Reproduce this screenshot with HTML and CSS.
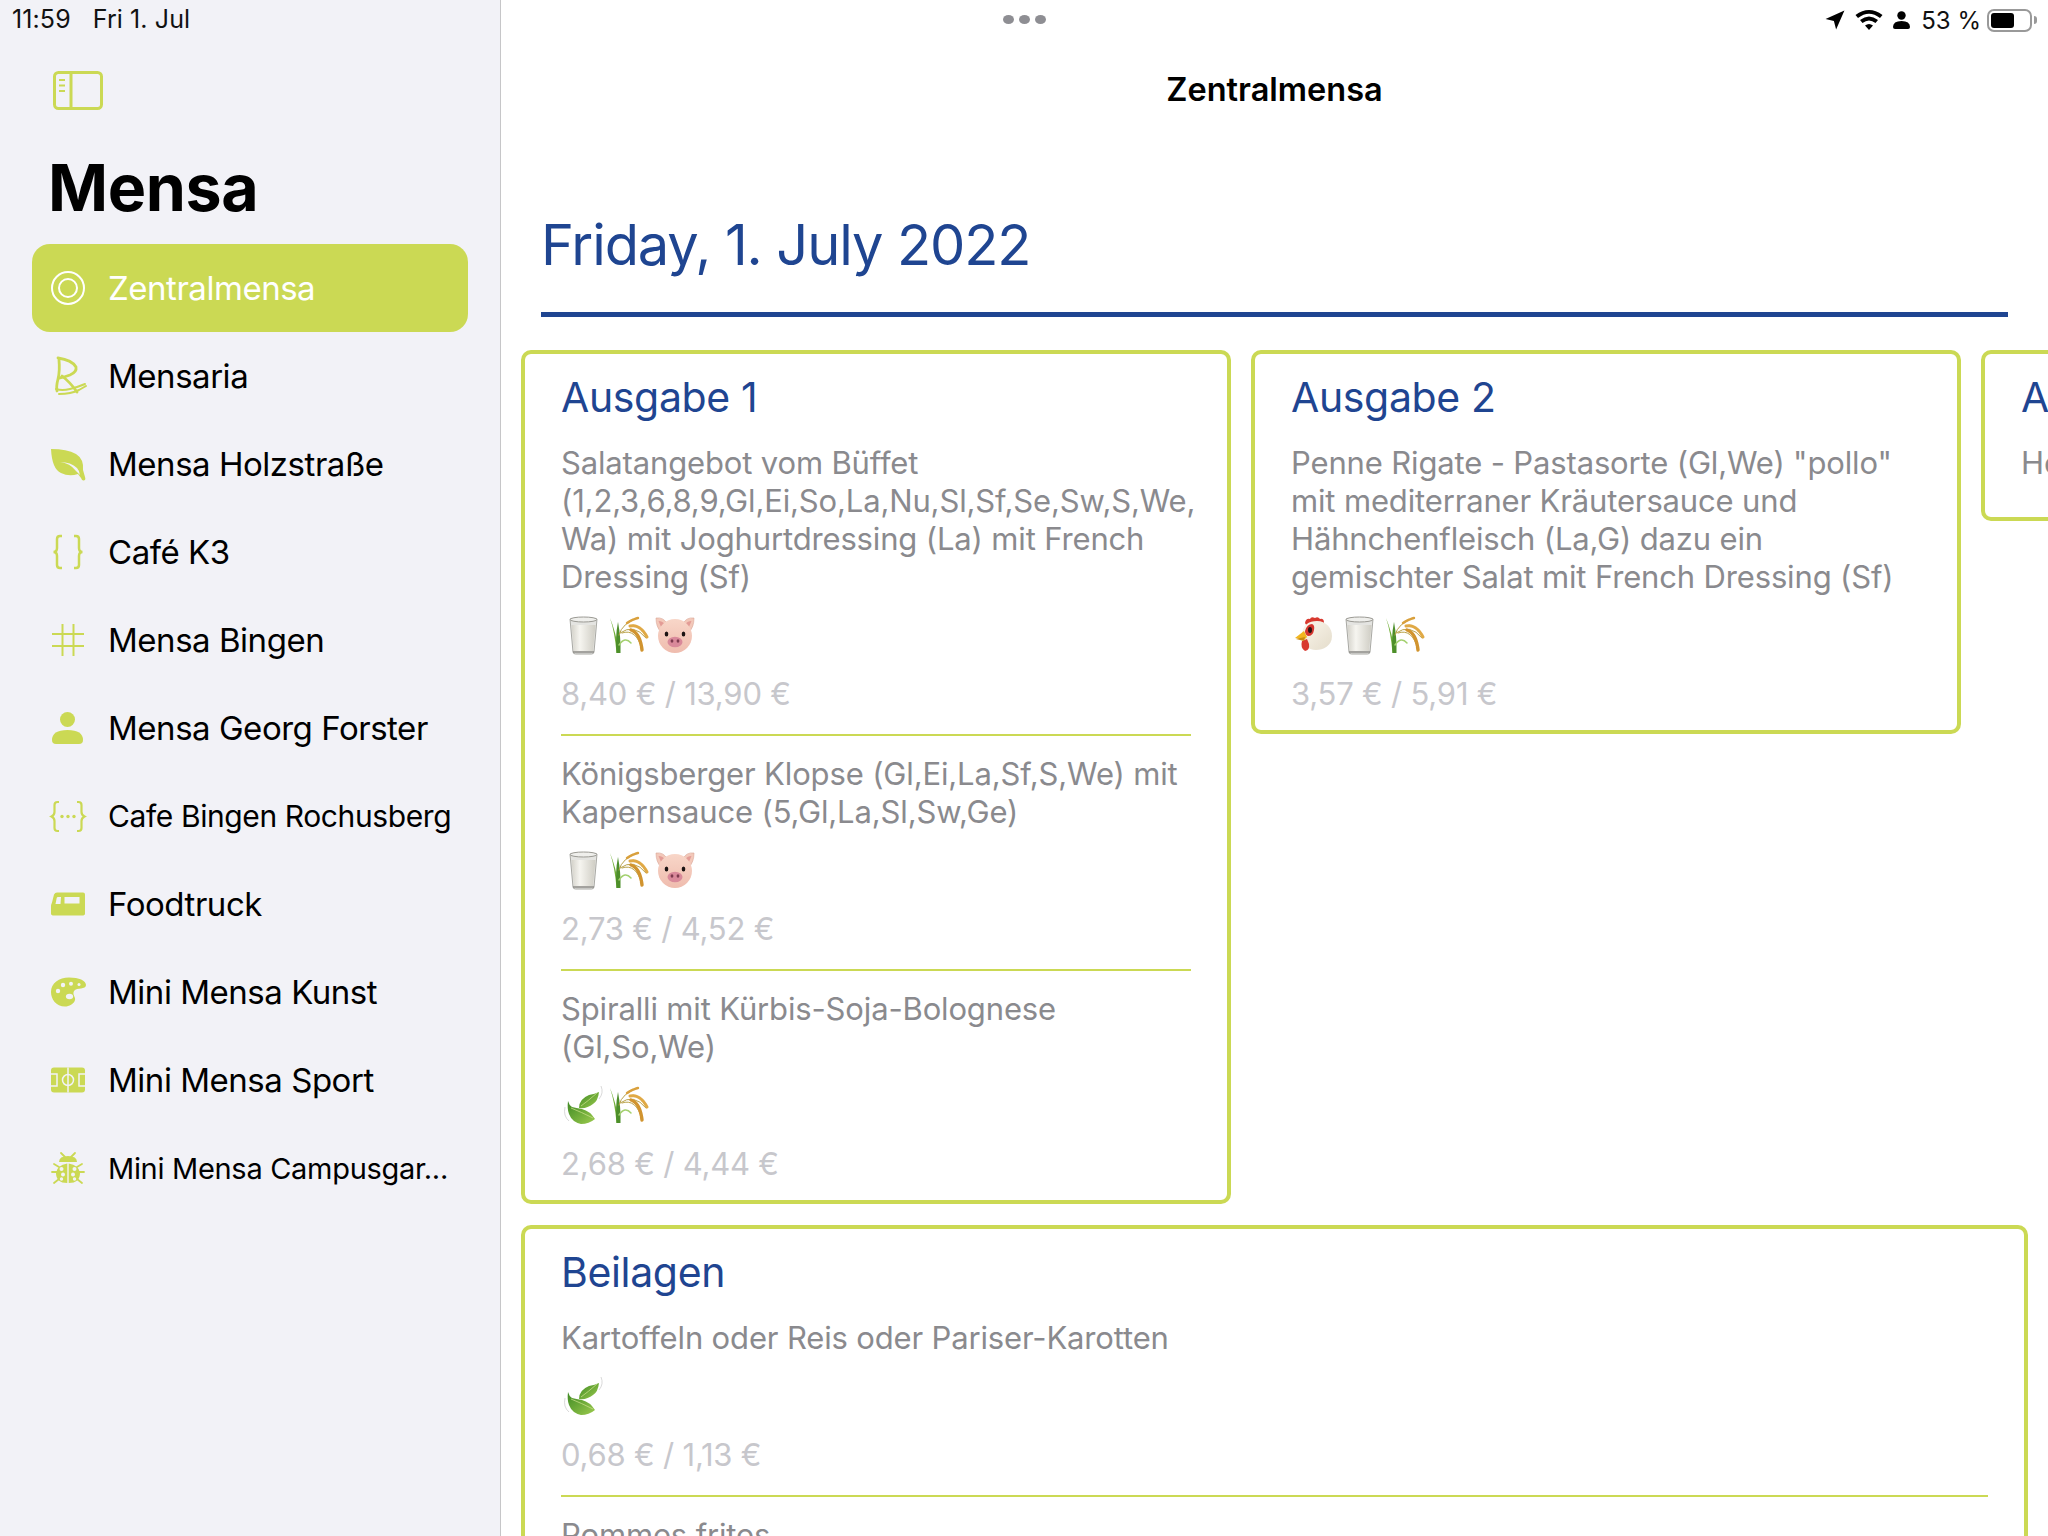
FILE: index.html
```html
<!DOCTYPE html>
<html lang="de">
<head>
  <meta charset="UTF-8" />
  <title>Mensa</title>
  <link rel="stylesheet" href="styles.css">
</head>
<body>
  <!-- emoji sprites, 46x40 cells -->
  <svg class="sprites" width="0" height="0">
    <defs>
      <linearGradient id="milk" x1="0" y1="0" x2="1" y2="0">
        <stop offset="0" stop-color="#d4d2ca"/><stop offset=".35" stop-color="#f6f5f0"/><stop offset="1" stop-color="#cfcdc4"/>
      </linearGradient>
      <linearGradient id="pigSkin" x1="0" y1="0" x2="0" y2="1">
        <stop offset="0" stop-color="#f8d6c8"/><stop offset="1" stop-color="#efbcae"/>
      </linearGradient>
      <linearGradient id="hen" x1="0" y1="0" x2="1" y2="1">
        <stop offset="0" stop-color="#fbf7ec"/><stop offset="1" stop-color="#e4dccb"/>
      </linearGradient>
      <linearGradient id="leafGreen" x1="0" y1="0" x2="1" y2="1">
        <stop offset="0" stop-color="#3f8a24"/><stop offset="1" stop-color="#9ccb4e"/>
      </linearGradient>
      <symbol id="e-milk" viewBox="0 0 46 40">
        <path d="M9 4h27l-3 33q-.2 2-2.500 2h-16q-2.300 0-2.500-2z" fill="#e4e4e1" stroke="#a9a9a4" stroke-width="1"/>
        <path d="M10.500 10h24l-2.500 26h-19z" fill="url(#milk)"/>
        <ellipse cx="22.500" cy="4.500" rx="13.500" ry="2.500" fill="#efefec" stroke="#9b9a94" stroke-width="1"/>
        <path d="M12 37h21" stroke="#8e8d87" stroke-width="1.500"/>
      </symbol>
      <symbol id="e-rice" viewBox="0 0 46 40">
        <path d="M3 3q6 14 9 35H9.500Q8 18 3 3z" fill="#6fae35"/>
        <path d="M11 7q3 16 2.500 31h-4q-1.500-16 1.500-31z" fill="#4d8f2a"/>
        <g fill="none" stroke-linecap="round">
          <path d="M12 30q6-9 12-2" stroke="#a3d06e" stroke-width="1.500"/>
          <path d="M12 20Q15 8 31 3M13 18q14-10 26 5M15 18q14-5 20 16" stroke="#b9a24a" stroke-width="1"/>
          <path d="M20 8q6-4 11-5" stroke="#d9a03c" stroke-width="2.400" stroke-dasharray="2.500 .8"/>
          <path d="M23 11q10-2 17 11" stroke="#e0a945" stroke-width="3" stroke-dasharray="3 .6"/>
          <path d="M24 15q9 3 11 20" stroke="#d1942f" stroke-width="3.400" stroke-dasharray="3.500 .6"/>
        </g>
      </symbol>
      <symbol id="e-pig" viewBox="0 0 46 40">
        <path d="M3 3q8-1 11 6l-6 8Q3 12 3 3zM41 3q-8-1-11 6l6 8q5-5 5-14z" fill="#f3c8b9" stroke="#d9a596" stroke-width=".6"/>
        <path d="M5.500 6q4 0 6 3l-3 4zM38.500 6q-4 0-6 3l3 4z" fill="#e39c96"/>
        <ellipse cx="22" cy="21" rx="17" ry="17" fill="url(#pigSkin)"/>
        <ellipse cx="22" cy="27" rx="7.500" ry="5.200" fill="#d9899a"/>
        <ellipse cx="19" cy="26" rx="1.400" ry="1.800" fill="#7d3a4e"/>
        <ellipse cx="25" cy="26" rx="1.400" ry="1.800" fill="#7d3a4e"/>
        <ellipse cx="13.500" cy="19" rx="1.800" ry="2.600" fill="#1b1413"/>
        <ellipse cx="30.500" cy="19" rx="1.800" ry="2.600" fill="#1b1413"/>
      </symbol>
      <symbol id="e-hen" viewBox="0 0 46 40">
        <path d="M14 8q1-5 5-4 1-3 5-1 3-2 5 1 4-1 4 4l-3 5H17z" fill="#d8392f"/>
        <path d="M11 20C11 10 18 6 26 6c9 0 15 7 15 15 0 10-9 14-16 14-8 0-14-6-14-15z" fill="url(#hen)"/>
        <path d="M14 16q2-7 7-7 3 1 2 6-1 6-6 6-3-1-3-5z" fill="#d5362f"/>
        <ellipse cx="19" cy="15" rx="2" ry="3" fill="#2a1512"/>
        <path d="M11 26q-2 7 3 10 5-1 4-7l-2-5z" fill="#d8392f"/>
        <path d="M4 23l9-7 3 6-3 3z" fill="#f2b61f"/>
        <path d="M5 24l9-2-1 4z" fill="#c98a12"/>
      </symbol>
      <symbol id="e-leaves" viewBox="0 0 46 40">
        <path d="M18 23q0-9 10-13 6-1 10-3-1 9-6 12-6 5-14 4z" fill="url(#leafGreen)"/>
        <path d="M20 21q7-5 16-13" stroke="#c6dd87" stroke-width=".8" fill="none"/>
        <path d="M7 16q-1 8 1 13 3 8 12 10 8 0 14-5-5-8-13-10-6-1-10-2-3-2-4-6z" fill="url(#leafGreen)"/>
        <path d="M10 23q10 4 22 10" stroke="#c6dd87" stroke-width=".8" fill="none"/>
        <path d="M40 1q3 7-2 13M4 22q-2 9 4 14" stroke="#cfcfcf" stroke-width=".8" fill="none"/>
      </symbol>
    </defs>
  </svg>

  <div class="multitask-dots"><i></i><i></i><i></i></div>

  <div class="app">
    <aside class="sidebar">
      <div class="status-left"><span>11:59</span><span>Fri 1. Jul</span></div>
      <svg class="sidebar-toggle" width="52" height="41" viewBox="0 0 52 41" fill="none" stroke="#cbd954" stroke-width="3">
        <rect x="2.500" y="2.500" width="47" height="36" rx="4"/>
        <path d="M19 2.500v36"/>
        <path d="M7 10h6M7 15.500h6M7 21h6" stroke-width="2.200"/>
      </svg>
      <h1 class="sidebar-title">Mensa</h1>

      <nav class="nav">
        <a class="nav-row active">
          <svg class="nav-icon" viewBox="0 0 36 36" fill="none" stroke="#fff" stroke-width="2"><circle cx="18" cy="18" r="16"/><circle cx="18" cy="18" r="9"/></svg>
          <span>Zentralmensa</span>
        </a>
        <a class="nav-row">
          <svg class="nav-icon" viewBox="0 0 36 36" fill="none" stroke="#cbd954" stroke-width="2.800" stroke-linecap="round" stroke-linejoin="round"><path d="M8 0q14 2 18 9 1 5-6 8-5 2-11 3"/><path d="M9 2q1 11-1 19t-1 12"/><path d="M12 18q8 6 15 16"/><path d="M6 31q6 2 14 0 8-2 15-5M9 36q12 0 20-4l7-4" stroke-width="2"/></svg>
          <span>Mensaria</span>
        </a>
        <a class="nav-row">
          <svg class="nav-icon" viewBox="0 0 36 36" fill="#cbd954"><path fill-rule="evenodd" d="M1 3q16 0 25 5 8 5 7 16l2 7q1 3-1 3.500-2 .5-3-2.500l-3-4q-9 3-17-1Q2 23 1 3zM10 16q10 1 16 9l4 4q-1-5-3-7-6-6-17-6z"/></svg>
          <span>Mensa Holzstraße</span>
        </a>
        <a class="nav-row">
          <svg class="nav-icon" viewBox="0 0 36 36" fill="none" stroke="#cbd954" stroke-width="2.500"><path d="M12 2H10q-3 0-3 3v9q0 4-3.500 4Q7 18 7 22v9q0 3 3 3h2"/><path d="M24 2h2q3 0 3 3v9q0 4 3.500 4-3.500 0-3.500 4v9q0 3-3 3h-2"/></svg>
          <span>Café K3</span>
        </a>
        <a class="nav-row">
          <svg class="nav-icon" viewBox="0 0 36 36" fill="none" stroke="#cbd954" stroke-width="2"><path d="M12.500 2v32M23.500 2v32M2 12h32M2 24h32"/></svg>
          <span>Mensa Bingen</span>
        </a>
        <a class="nav-row">
          <svg class="nav-icon" viewBox="0 0 36 36" fill="#cbd954"><circle cx="17.500" cy="9.500" r="7.500"/><path d="M2 30q0-10 15.500-10T33 30q0 4-4 4H6q-4 0-4-4z"/></svg>
          <span>Mensa Georg Forster</span>
        </a>
        <a class="nav-row nav-small">
          <svg class="nav-icon" viewBox="0 0 36 36" fill="none" stroke="#cbd954" stroke-width="2.200"><path d="M9 4H7.500q-3 0-3 3v7q0 3-3 4.500 3 1.500 3 4.500v7q0 3 3 3H9"/><path d="M27 4h1.500q3 0 3 3v7q0 3 3 4.500-3 1.500-3 4.500v7q0 3-3 3H27"/><g fill="#cbd954" stroke="none"><circle cx="12" cy="18.500" r="1.700"/><circle cx="18" cy="18.500" r="1.700"/><circle cx="24" cy="18.500" r="1.700"/></g></svg>
          <span>Cafe Bingen Rochusberg</span>
        </a>
        <a class="nav-row">
          <svg class="nav-icon" viewBox="0 0 36 36"><path fill="#cbd954" fill-rule="evenodd" d="M7 6.500h26q2 0 2 2v19q0 2-3 2H4q-3 0-3-2v-7q0-2 1-4l2-8q1-2 3-2zM8 11q-1 0-1.300 1L5.500 18h5l.5-7zM14.500 11v6.500h15V11z"/></svg>
          <span>Foodtruck</span>
        </a>
        <a class="nav-row">
          <svg class="nav-icon" viewBox="0 0 36 36"><path fill="#cbd954" d="M19 3.500c10 0 17 3 17 7.500 0 5-9 2-12 6-2 4 2 6 1 9-1 4-6 6.500-10 6.500C6 32.500 1 25 1 18 1 9 9 3.500 19 3.500z"/><g fill="#f2f2f7"><circle cx="8" cy="17" r="2.200"/><circle cx="13" cy="11" r="2.200"/><circle cx="21" cy="9.700" r="2"/><circle cx="29" cy="10.500" r="1.500"/><ellipse cx="19.500" cy="22.500" rx="3.600" ry="2.800"/></g></svg>
          <span>Mini Mensa Kunst</span>
        </a>
        <a class="nav-row">
          <svg class="nav-icon" viewBox="0 0 36 36"><rect x="1" y="5.500" width="34" height="25" rx="3" fill="#cbd954"/><g fill="none" stroke="#f2f2f7" stroke-width="1.500"><path d="M18 5.500v25"/><circle cx="18" cy="18" r="5.500"/><path d="M1 12h6v12H1M35 12h-6v12h6"/></g></svg>
          <span>Mini Mensa Sport</span>
        </a>
        <a class="nav-row nav-smaller">
          <svg class="nav-icon" viewBox="0 0 36 36"><g stroke="#cbd954" stroke-width="1.800" fill="none" stroke-linecap="round"><path d="M11 3l4 4M25 3l-4 4M2 22h5M29 22h5M4 14l5 3M32 14l-5 3M4 33l5-4M32 33l-5-4"/></g><path fill="#cbd954" d="M9 12q0-6 9-6t9 6zM6 23q1-8 11.300-9.500V33Q6 33 6 23zM30 23q-1-8-11.300-9.500V33Q30 33 30 23z"/><g fill="#f2f2f7"><circle cx="11.500" cy="19" r="2"/><circle cx="13" cy="24.500" r="2"/><circle cx="11.500" cy="29" r="1.700"/><circle cx="24.500" cy="19" r="2"/><circle cx="23" cy="24.500" r="2"/><circle cx="24.500" cy="29" r="1.700"/></g></svg>
          <span>Mini Mensa Campusgar...</span>
        </a>
      </nav>
    </aside>

    <main class="main">
      <div class="status-right">
        <svg width="20" height="20" viewBox="0 0 18 18"><path d="M17.500.5L10 17.500 8 10 .5 8z"/></svg>
        <svg width="28" height="20" viewBox="0 0 28 20"><path d="M14 20l-4-4.500q4-3 8 0zM7.500 13L5 10q9-7 18 0l-2.500 3q-6.500-5-13 0zM3 8L.5 5Q14-5 27.500 5L25 8Q14-.5 3 8z"/></svg>
        <svg width="17" height="18" viewBox="0 0 17 18"><circle cx="8.500" cy="4.500" r="4.200"/><path d="M0 16q0-6 8.500-6T17 16q0 2-2 2H2q-2 0-2-2z"/></svg>
        <span class="battery-pct">53 %</span>
        <span class="battery"><span class="battery-fill"></span></span>
        <span class="battery-cap"></span>
      </div>

      <div class="nav-title">Zentralmensa</div>
      <h2 class="date">Friday, 1. July 2022</h2>

      <div class="cards">
        <div class="card-row">
          <section class="card">
            <h3>Ausgabe 1</h3>
            <div class="meal">
              <p class="meal-name">Salatangebot vom Büffet (1,2,3,6,8,9,Gl,Ei,So,La,Nu,Sl,Sf,Se,Sw,S,We, Wa) mit Joghurtdressing (La) mit French Dressing (Sf)</p>
              <div class="emojis">
                <svg><use href="#e-milk"/></svg><svg><use href="#e-rice"/></svg><svg><use href="#e-pig"/></svg>
              </div>
              <p class="price">8,40 € / 13,90 €</p>
            </div>
            <div class="meal">
              <p class="meal-name">Königsberger Klopse (Gl,Ei,La,Sf,S,We) mit Kapernsauce (5,Gl,La,Sl,Sw,Ge)</p>
              <div class="emojis">
                <svg><use href="#e-milk"/></svg><svg><use href="#e-rice"/></svg><svg><use href="#e-pig"/></svg>
              </div>
              <p class="price">2,73 € / 4,52 €</p>
            </div>
            <div class="meal">
              <p class="meal-name">Spiralli mit Kürbis-Soja-Bolognese (Gl,So,We)</p>
              <div class="emojis">
                <svg><use href="#e-leaves"/></svg><svg><use href="#e-rice"/></svg>
              </div>
              <p class="price">2,68 € / 4,44 €</p>
            </div>
          </section>

          <section class="card">
            <h3>Ausgabe 2</h3>
            <div class="meal">
              <p class="meal-name">Penne Rigate - Pastasorte (Gl,We) "pollo" mit mediterraner Kräutersauce und Hähnchenfleisch (La,G) dazu ein gemischter Salat mit French Dressing (Sf)</p>
              <div class="emojis">
                <svg><use href="#e-hen"/></svg><svg><use href="#e-milk"/></svg><svg><use href="#e-rice"/></svg>
              </div>
              <p class="price">3,57 € / 5,91 €</p>
            </div>
          </section>

          <section class="card card-short">
            <h3>Ausgabe 3</h3>
            <div class="meal">
              <p class="meal-name">Heute geschlossen</p>
            </div>
          </section>
        </div>

        <section class="card card-wide">
          <h3>Beilagen</h3>
          <div class="meal">
            <p class="meal-name">Kartoffeln oder Reis oder Pariser-Karotten</p>
            <div class="emojis">
              <svg><use href="#e-leaves"/></svg>
            </div>
            <p class="price">0,68 € / 1,13 €</p>
          </div>
          <div class="meal">
            <p class="meal-name">Pommes frites</p>
          </div>
        </section>
      </div>
    </main>
  </div>
</body>
</html>
```

FILE: styles.css
```css
html, body {
  margin: 0;
  padding: 0;
  height: 1536px;
  overflow: hidden;
  background: #fff;
  font-family: Inter, "Liberation Sans", sans-serif;
  color: #000;
}

.sprites {
  position: absolute;
}

.multitask-dots {
  position: absolute;
  top: 15px;
  left: 1003px;
  display: flex;
  gap: 5px;
}

.multitask-dots i {
  width: 11px;
  height: 9px;
  border-radius: 50%;
  background: #8e8e93;
}

.app {
  display: flex;
  height: 1536px;
}

/* sidebar */
.sidebar {
  flex: none;
  width: 501px;
  box-sizing: border-box;
  background: #f2f2f7;
  border-right: 1px solid #c6c6c8;
  padding-top: 6px;
}

.status-left {
  display: flex;
  gap: 22px;
  padding-left: 12px;
  font-size: 25px;
  line-height: 27px;
  letter-spacing: 0.1px;
  color: #111;
}

.sidebar-toggle {
  display: block;
  margin: 37px 0 0 52px;
}

.sidebar-title {
  margin: 37px 0 0 48px;
  font-size: 64.500px;
  line-height: 80px;
  font-weight: 700;
  letter-spacing: -0.4px;
}

.nav {
  display: flex;
  flex-direction: column;
  margin: 16px 32px 0;
}

.nav-row {
  display: flex;
  align-items: center;
  gap: 22px;
  height: 88px;
  padding-left: 18px;
  border-radius: 18px;
  font-size: 33px;
  letter-spacing: -0.47px;
  color: #000;
  white-space: nowrap;
}

.nav-row.active {
  background: #cbd954;
  color: #fff;
}

.nav-row.nav-small {
  font-size: 30px;
  letter-spacing: -0.4px;
}

.nav-row.nav-smaller {
  font-size: 29px;
  letter-spacing: -0.3px;
}

.nav-icon {
  flex: none;
  width: 36px;
  height: 36px;
  overflow: visible;
}

/* main */
.main {
  flex: 1;
  min-width: 0;
  overflow: hidden;
}

.status-right {
  display: flex;
  align-items: center;
  justify-content: flex-end;
  height: 40px;
  padding-right: 11px;
  font-size: 24px;
  color: #111;
}

.status-right svg {
  fill: #000;
  margin-right: 10px;
}

.battery-pct {
  margin-right: 6px;
  margin-left: 1px;
}

.battery {
  box-sizing: border-box;
  width: 45px;
  height: 23px;
  padding: 2px;
  border: 2px solid #999;
  border-radius: 7px;
}

.battery-fill {
  display: block;
  width: 23px;
  height: 100%;
  border-radius: 3px;
  background: #000;
}

.battery-cap {
  width: 3px;
  height: 8px;
  margin-left: 2px;
  border-radius: 0 3px 3px 0;
  background: #999;
}

.nav-title {
  margin-top: 30px;
  height: 40px;
  line-height: 40px;
  text-align: center;
  font-size: 32.500px;
  font-weight: 600;
}

.date {
  margin: 100px 40px 0;
  height: 107px;
  box-sizing: border-box;
  border-bottom: 5px solid #1f4591;
  font-size: 56px;
  line-height: 70px;
  font-weight: 400;
  color: #1f4591;
  letter-spacing: -1.1px;
}

.cards {
  display: flex;
  flex-direction: column;
  gap: 21px;
  margin: 33px 0 0 20px;
}

.card-row {
  display: flex;
  align-items: flex-start;
  gap: 20px;
}

.card {
  flex: none;
  box-sizing: border-box;
  width: 710px;
  padding: 18px 36px 17px;
  border: 4px solid #cbd954;
  border-radius: 10px;
  background: #fff;
}

.card-short {
  padding-bottom: 35px;
}

.card.card-wide {
  width: 1507px;
}

.card h3 {
  margin: 0 0 22px;
  font-size: 41px;
  line-height: 50px;
  font-weight: 400;
  letter-spacing: -0.35px;
  color: #1f4591;
  white-space: nowrap;
}

.meal + .meal {
  margin-top: 21px;
  padding-top: 19px;
  border-top: 2px solid #cbd954;
}

.meal-name {
  margin: 0;
  font-size: 31px;
  line-height: 38px;
  letter-spacing: -0.15px;
  color: #8a8a8e;
}

.emojis {
  display: flex;
  height: 40px;
  margin: 19px 0 20px;
}

.emojis svg {
  width: 46px;
  height: 40px;
}

.price {
  margin: 0;
  font-size: 31px;
  line-height: 38px;
  letter-spacing: -0.2px;
  color: #c7c7cc;
}
```
